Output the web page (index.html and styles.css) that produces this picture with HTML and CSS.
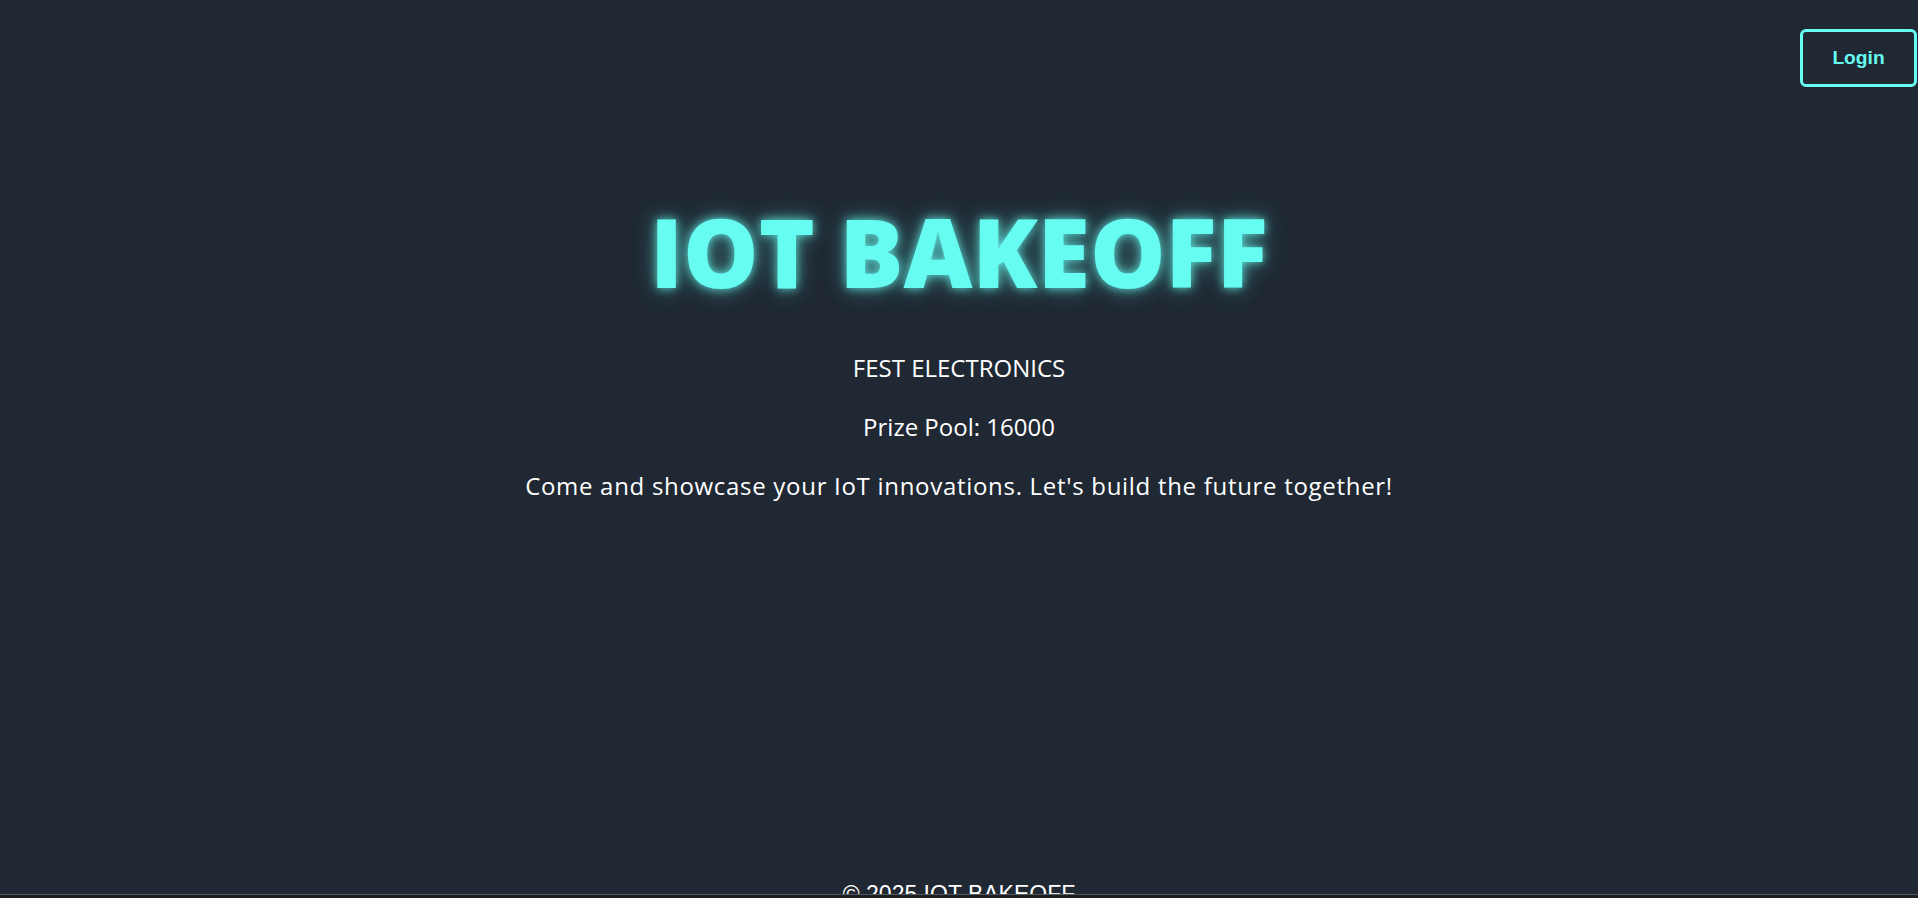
FILE: index.html
```html
<!DOCTYPE html>
<html lang="en">
<head>
<meta charset="utf-8">
<title>IOT BAKEOFF</title>
<link rel="stylesheet" href="styles.css">
</head>
<body>
<div class="page">
  <header class="topbar">
    <button class="login-btn">Login</button>
  </header>
  <main class="hero">
    <h1 class="title">IOT BAKEOFF</h1>
    <p class="line">FEST ELECTRONICS</p>
    <p class="line">Prize Pool: 16000</p>
    <p class="line desc">Come and showcase your IoT innovations. Let's build the future together!</p>
  </main>
  <footer class="footer">© 2025 IOT BAKEOFF</footer>
</div>
<div class="bottom-strip"></div>
</body>
</html>
```
FILE: styles.css
```css
html, body {
  margin: 0;
  padding: 0;
  overflow: hidden;
  background: #1f2833;
}
body {
  font-family: "Open Sans", "Liberation Sans", sans-serif;
  color: #ffffff;
}
.page {
  display: flex;
  flex-direction: column;
  min-height: calc(100vh + 29px);
}
.topbar {
  position: absolute;
  top: 29px;
  right: 1px;
}
.login-btn {
  box-sizing: border-box;
  width: 117px;
  height: 58px;
  padding: 0;
  border: 3px solid #66fcf1;
  border-radius: 6px;
  background: transparent;
  color: #66fcf1;
  font-family: "Liberation Sans", Arial, sans-serif;
  font-weight: bold;
  font-size: 19.2px;
  cursor: pointer;
}
.hero {
  flex: 1;
  display: flex;
  flex-direction: column;
  align-items: center;
  text-align: center;
  padding-top: 194px;
}
.title {
  margin: 0 0 42px;
  font-size: 95px;
  line-height: 114px;
  font-weight: 800;
  color: #66fcf1;
  letter-spacing: 0;
  text-shadow: 0 0 10px rgba(102, 252, 241, 0.8), 0 0 22px rgba(102, 252, 241, 0.45);
}
.line {
  margin: 0 0 23px;
  font-size: 24px;
  line-height: 36px;
  letter-spacing: 0;
}
.desc {
  letter-spacing: 0.7px;
}
.footer {
  padding: 20px 0;
  text-align: center;
  font-family: "Liberation Sans", Arial, sans-serif;
  font-size: 23px;
  line-height: 26px;
  color: #ffffff;
}
.bottom-strip {
  position: fixed;
  left: 0;
  right: 0;
  bottom: 0;
  height: 3px;
  border-top: 1px solid #555a60;
  background: #1d1f22;
}
```
